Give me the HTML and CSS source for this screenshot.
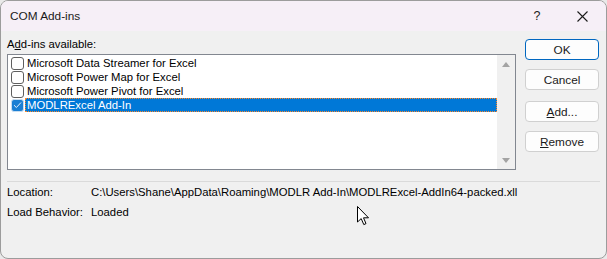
FILE: index.html
```html
<!DOCTYPE html>
<html lang="en">

<head>
    <meta charset="UTF-8">
    <meta name="viewport" content="width=device-width, initial-scale=1.0">
    <title>COM Add-ins</title>
    <link rel="stylesheet" href="styles.css">
</head>

<body>
    <div class="window">
        <div class="titlebar">
            <span class="title">COM Add-ins</span>
            <span class="help">?</span>
            <span class="close">
                <svg width="11" height="11" viewBox="0 0 11 11">
                    <path d="M0.5 0.5 L10.5 10.5 M10.5 0.5 L0.5 10.5" stroke="#1b1b1b" stroke-width="1.1" fill="none" />
                </svg>
            </span>
        </div>

        <div class="content">
            <div class="main">
                <div class="label">A<u>d</u>d-ins available:</div>
                <div class="listbox">
                    <ul class="items">
                        <li class="item"><span class="check"></span><span class="name">Microsoft Data Streamer for Excel</span></li>
                        <li class="item"><span class="check"></span><span class="name">Microsoft Power Map for Excel</span></li>
                        <li class="item"><span class="check"></span><span class="name">Microsoft Power Pivot for Excel</span></li>
                        <li class="item selected">
                            <span class="check checked">
                                <svg width="9" height="8" viewBox="0 0 9 8">
                                    <path d="M1 4.2 L3.4 6.5 L8 1.5" stroke="#e8f1fb" stroke-width="1" fill="none" />
                                </svg>
                            </span>
                            <span class="name">MODLRExcel Add-In</span>
                        </li>
                    </ul>
                    <div class="scrollbar">
                        <span class="arrow up"></span>
                        <span class="arrow down"></span>
                    </div>
                </div>
            </div>

            <div class="buttons">
                <button class="btn default">OK</button>
                <button class="btn cancel">Cancel</button>
                <button class="btn add"><u>A</u>dd...</button>
                <button class="btn remove"><u>R</u>emove</button>
            </div>
        </div>

        <div class="separator"></div>

        <div class="details">
            <div class="row">
                <span class="key">Location:</span>
                <span class="value">C:\Users\Shane\AppData\Roaming\MODLR Add-In\MODLRExcel-AddIn64-packed.xll</span>
            </div>
            <div class="row">
                <span class="key">Load Behavior:</span>
                <span class="value">Loaded</span>
            </div>
        </div>

        <svg class="cursor" width="13" height="20" viewBox="0 0 13 20">
            <path d="M0.5 0.5 L0.5 16 L4.2 12.6 L6.8 18.6 L9 17.6 L6.5 11.8 L11.5 11.8 Z" fill="#ffffff" stroke="#000000" stroke-width="1" stroke-linejoin="round" />
        </svg>
    </div>
</body>

</html>
```

FILE: styles.css
```css
* {
    box-sizing: border-box;
    margin: 0;
    padding: 0;
}

body {
    background-color: #e9e9e9;
    font-family: "Liberation Sans", Arial, sans-serif;
    font-size: 11.3px;
    color: #000;
}

.window {
    position: relative;
    width: 607px;
    height: 259px;
    background-color: #f0f0f0;
    border: 1px solid #9c9c9c;
    border-radius: 8px;
    overflow: hidden;
}

.titlebar {
    height: 30px;
    background-color: #f6eff7;
    display: flex;
    align-items: center;
}

.title {
    padding-left: 9px;
    flex: 1;
    font-size: 11.8px;
    color: #1a1a1a;
}

.help {
    width: 46px;
    text-align: center;
    font-size: 12.5px;
    color: #1a1a1a;
}

.close {
    width: 46px;
    display: flex;
    justify-content: center;
    padding-right: 1px;
}

.content {
    display: flex;
    align-items: flex-start;
    gap: 9px;
    padding: 0 6px;
}

.main {
    padding-top: 6px;
}

.label {
    line-height: 14px;
    margin-bottom: 3px;
}

.listbox {
    width: 509px;
    height: 116px;
    border: 1px solid #828790;
    background-color: #fff;
    display: flex;
}

.items {
    list-style: none;
    flex: 1;
    padding-top: 1px;
}

.item {
    height: 14px;
    display: flex;
    align-items: center;
    padding-left: 3px;
    line-height: 14px;
    white-space: nowrap;
}

.check {
    width: 13px;
    height: 13px;
    border: 1px solid #5f5f5f;
    border-radius: 3px;
    background-color: #fff;
    margin-right: 1px;
    display: flex;
    align-items: center;
    justify-content: center;
}

.check.checked {
    background-color: #1a7fd4;
    border-color: #c9ddf0;
}

.name {
    padding-left: 2px;
    padding-right: 4px;
    height: 14px;
    flex: 1;
}

.selected .name {
    background-color: #0078d7;
    color: #fff;
    outline: 1px dotted #ff8728;
    outline-offset: -1px;
}

.scrollbar {
    width: 18px;
    background-color: #f0f0f0;
    display: flex;
    flex-direction: column;
    justify-content: space-between;
    align-items: center;
    padding: 7px 0 6px;
}

.arrow {
    width: 0;
    height: 0;
    border-left: 4.5px solid transparent;
    border-right: 4.5px solid transparent;
}

.arrow.up {
    border-bottom: 5px solid #a3a3a3;
}

.arrow.down {
    border-top: 5px solid #a3a3a3;
}

.buttons {
    padding-top: 8px;
    display: flex;
    flex-direction: column;
}

.btn {
    width: 74px;
    height: 21px;
    font-family: inherit;
    font-size: 11.8px;
    color: #1a1a1a;
    background-color: #fdfdfd;
    border: 1px solid #d0d0d0;
    border-radius: 4px;
}

.btn.default {
    border-color: #0067c0;
}

.btn.cancel {
    margin-top: 9px;
}

.btn.add {
    margin-top: 11px;
}

.btn.remove {
    margin-top: 9px;
}

.separator {
    margin: 11px 6px 0 6px;
    height: 1px;
    background-color: #dadada;
}

.details {
    padding: 0 6px;
}

.row {
    display: flex;
    height: 20px;
    line-height: 20px;
    white-space: nowrap;
}

.key {
    width: 84px;
}

.cursor {
    position: absolute;
    left: 356px;
    top: 205px;
}
```
